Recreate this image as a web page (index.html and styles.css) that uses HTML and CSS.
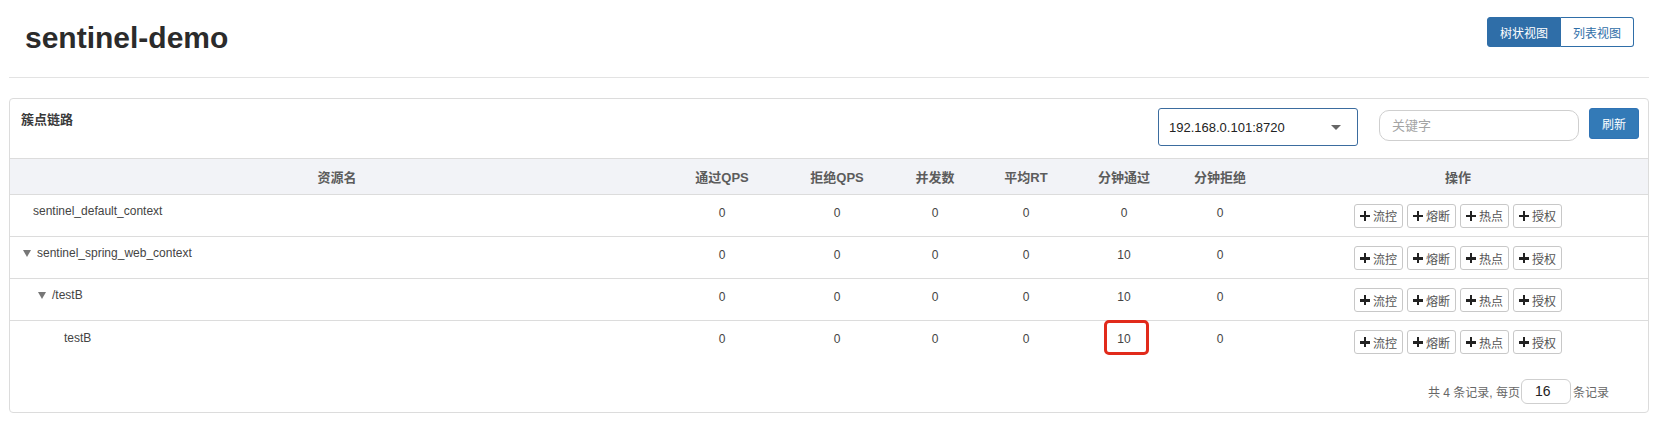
FILE: index.html
```html
<!DOCTYPE html>
<html lang="zh">
<head>
<meta charset="utf-8">
<title>sentinel-demo</title>
<link rel="stylesheet" href="styles.css">
</head>
<body>
<div class="wrap">
  <div class="page-header">
    <h1 class="title">sentinel-demo</h1>
    <div class="view-group">
      <button class="view-btn active">树状视图</button>
      <button class="view-btn">列表视图</button>
    </div>
  </div>

  <div class="panel">
    <div class="panel-head">
      <div class="panel-title">簇点链路</div>
      <div class="controls">
        <div class="select">
          <span>192.168.0.101:8720</span>
          <span class="caret"></span>
        </div>
        <div class="search">关键字</div>
        <button class="refresh">刷新</button>
      </div>
    </div>

    <table class="tree">
      <colgroup>
        <col class="c-name"><col class="c-a"><col class="c-b"><col class="c-c"><col class="c-d"><col class="c-e"><col class="c-f"><col class="c-ops">
      </colgroup>
      <thead>
        <tr>
          <th>资源名</th><th>通过QPS</th><th>拒绝QPS</th><th>并发数</th><th>平均RT</th><th>分钟通过</th><th>分钟拒绝</th><th>操作</th>
        </tr>
      </thead>
      <tbody>
        <tr>
          <td class="name lvl0"><span class="leaf"></span>sentinel_default_context</td>
          <td>0</td><td>0</td><td>0</td><td>0</td><td>0</td><td>0</td>
          <td class="ops">
            <div class="ops-group">
              <button class="op"><span class="plus"></span>流控</button><button class="op"><span class="plus"></span>熔断</button><button class="op"><span class="plus"></span>热点</button><button class="op"><span class="plus"></span>授权</button>
            </div>
          </td>
        </tr>
        <tr>
          <td class="name lvl0"><span class="tri"></span>sentinel_spring_web_context</td>
          <td>0</td><td>0</td><td>0</td><td>0</td><td>10</td><td>0</td>
          <td class="ops">
            <div class="ops-group">
              <button class="op"><span class="plus"></span>流控</button><button class="op"><span class="plus"></span>熔断</button><button class="op"><span class="plus"></span>热点</button><button class="op"><span class="plus"></span>授权</button>
            </div>
          </td>
        </tr>
        <tr>
          <td class="name lvl1"><span class="tri"></span>/testB</td>
          <td>0</td><td>0</td><td>0</td><td>0</td><td>10</td><td>0</td>
          <td class="ops">
            <div class="ops-group">
              <button class="op"><span class="plus"></span>流控</button><button class="op"><span class="plus"></span>熔断</button><button class="op"><span class="plus"></span>热点</button><button class="op"><span class="plus"></span>授权</button>
            </div>
          </td>
        </tr>
        <tr>
          <td class="name lvl2"><span class="leaf"></span>testB</td>
          <td>0</td><td>0</td><td>0</td><td>0</td><td><span class="hl">10</span></td><td>0</td>
          <td class="ops">
            <div class="ops-group">
              <button class="op"><span class="plus"></span>流控</button><button class="op"><span class="plus"></span>熔断</button><button class="op"><span class="plus"></span>热点</button><button class="op"><span class="plus"></span>授权</button>
            </div>
          </td>
        </tr>
      </tbody>
    </table>

    <div class="pager">
      <span>共 4 条记录, 每页</span>
      <div class="page-size">16</div>
      <span>条记录</span>
    </div>
  </div>
</div>
</body>
</html>
```

FILE: styles.css
```css
* { box-sizing: border-box; }
html, body { margin: 0; padding: 0; background: #fff; }
body {
  font-family: "Liberation Sans", Arial, "Noto Sans CJK SC", sans-serif;
  color: #333;
  font-size: 12px;
}
.wrap { margin: 0 5px 0 9px; }

.page-header {
  height: 78px;
  border-bottom: 1px solid #e3e3e3;
  display: flex;
  justify-content: space-between;
  align-items: flex-start;
}
.title {
  margin: 0;
  padding: 21px 0 0 16px;
  font-size: 30px;
  line-height: 34px;
  font-weight: bold;
  color: #2b2b2b;
}
.view-group {
  display: flex;
  margin: 17px 15px 0 0;
}
.view-btn {
  font-family: inherit;
  font-size: 12px;
  height: 30px;
  width: 74px;
  padding: 0;
  border: 1px solid #2f6ea8;
  background: #fff;
  color: #2f6ea8;
  cursor: pointer;
}
.view-btn:first-child { border-radius: 3px 0 0 3px; }
.view-btn:last-child { border-radius: 0 3px 3px 0; width: 73px; border-left: 0; }
.view-btn.active { background: #2f6ea8; color: #fff; }

.panel {
  margin-top: 20px;
  border: 1px solid #dcdcdc;
  border-radius: 4px;
  width: 1640px;
}
.panel-head {
  height: 60px;
  display: flex;
  justify-content: space-between;
  align-items: flex-start;
  padding: 0 9px 0 11px;
  border-bottom: 1px solid #dcdcdc;
}
.panel-title {
  margin-top: 11px;
  font-size: 13px;
  line-height: 20px;
  font-weight: bold;
  color: #3a3a3a;
}
.controls { display: flex; align-items: flex-start; }
.select {
  margin-top: 9px;
  width: 200px;
  height: 38px;
  border: 1px solid #3b6c9f;
  border-radius: 3px;
  display: flex;
  align-items: center;
  justify-content: space-between;
  padding: 0 16px 0 10px;
  font-size: 13px;
  color: #222;
}
.caret {
  width: 0; height: 0;
  border-left: 5px solid transparent;
  border-right: 5px solid transparent;
  border-top: 5px solid #666;
}
.search {
  margin: 11px 0 0 21px;
  width: 200px;
  height: 31px;
  border: 1px solid #cfcfcf;
  border-radius: 10px;
  padding: 0 12px;
  line-height: 29px;
  font-size: 13px;
  color: #a4a4a4;
}
.refresh {
  margin: 9px 0 0 10px;
  width: 50px;
  height: 31px;
  border: 1px solid #2f73b5;
  border-radius: 3px;
  background: #337ab7;
  color: #fff;
  font-family: inherit;
  font-size: 12px;
  padding: 0;
}

.tree {
  width: 1638px;
  border-collapse: collapse;
  table-layout: fixed;
}
.c-name { width: 654px; }
.c-a { width: 116px; }
.c-b { width: 114px; }
.c-c { width: 82px; }
.c-d { width: 100px; }
.c-e { width: 96px; }
.c-f { width: 96px; }
.c-ops { width: 380px; }

.tree th {
  height: 35px;
  background: #f2f3f7;
  border-bottom: 1px solid #dcdcdc;
  font-size: 13px;
  font-weight: bold;
  color: #5c5c5c;
  text-align: center;
  padding: 0;
}
.tree td {
  height: 42px;
  padding: 8px 0 0 0;
  vertical-align: top;
  line-height: 20px;
  text-align: center;
  color: #444;
  font-size: 12px;
}
.tree tbody tr:not(:last-child) td { border-bottom: 1px solid #dcdcdc; }

.tree td.name {
  text-align: left;
  padding-left: 13px;
  display: flex;
  align-items: center;
  height: 42px;
  padding-top: 0;
  padding-bottom: 8px;
}
.lvl1 { padding-left: 28px !important; }
.lvl2 { padding-left: 44px !important; }
.leaf { display: inline-block; width: 10px; }
.tri {
  display: inline-block;
  width: 0; height: 0;
  border-left: 4px solid transparent;
  border-right: 4px solid transparent;
  border-top: 7px solid #777;
  margin-right: 6px;
}

.ops-group {
  display: flex;
  justify-content: center;
  gap: 4px;
  margin-top: 1px;
}
.op {
  height: 24px;
  width: 49px;
  padding: 0;
  border: 1px solid #c8c8c8;
  border-radius: 3px;
  background: #fff;
  color: #555;
  font-family: inherit;
  font-size: 12px;
  display: flex;
  align-items: center;
  justify-content: center;
  gap: 3px;
}
.plus {
  position: relative;
  display: inline-block;
  width: 10px; height: 10px;
}
.plus::before, .plus::after {
  content: "";
  position: absolute;
  background: #222;
}
.plus::before { left: 0; right: 0; top: 4px; height: 2.5px; }
.plus::after { top: 0; bottom: 0; left: 4px; width: 2.5px; }

.hl { position: relative; display: inline-block; }
.hl::after {
  content: "";
  position: absolute;
  left: -13px; right: -18px; top: -9px; bottom: -6px;
  border: 3px solid #e12a1b;
  border-radius: 5px;
}

.pager {
  display: flex;
  justify-content: flex-end;
  align-items: center;
  padding: 16px 39px 8px 0;
  color: #666;
  font-size: 12px;
}
.page-size {
  width: 50px;
  height: 25px;
  border: 1px solid #cfcfcf;
  border-radius: 6px;
  margin: 0 2px 0 1px;
  padding-left: 13px;
  line-height: 23px;
  font-size: 14px;
  color: #222;
}
```
